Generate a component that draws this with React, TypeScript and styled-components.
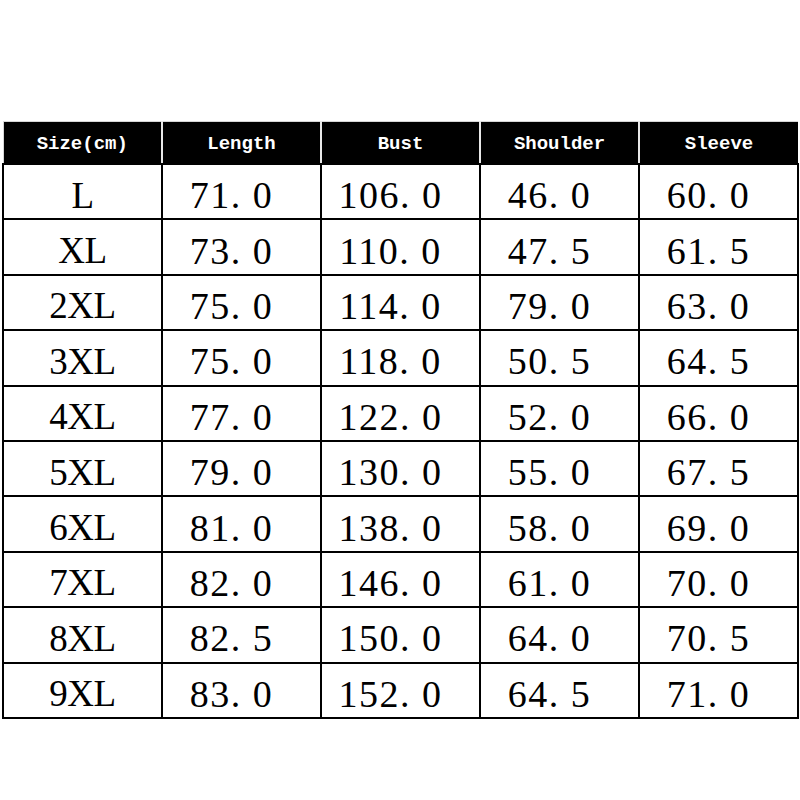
import React from 'react';
import styled, { createGlobalStyle } from 'styled-components';

const GlobalStyle = createGlobalStyle`
    body {
        margin: 0;
        background: #fff;
    }
`;

const Page = styled.div`
    width: 800px;
    height: 800px;
    padding-top: 121px;
    box-sizing: border-box;
`;

const Table = styled.table`
    margin-left: 2px;
    width: 797px;
    border-collapse: collapse;
    table-layout: fixed;
    border-top: 1px solid #d6d6d6;
`;

const HeadCell = styled.th`
    height: 38px;
    padding: 3px 0 0;
    background: #000;
    color: #fff;
    font-family: "Liberation Mono", "DejaVu Sans Mono", monospace;
    font-weight: bold;
    font-size: 19px;
    text-align: center;
    border-left: 2px solid #e8e8e8;
    border-bottom: 2px solid #000;

    &:first-child {
        border-left: 1px solid #d6d6d6;
    }
`;

const Row = styled.tr`
    height: 55.4px;
`;

const Cell = styled.td<{ $num?: boolean }>`
    padding: 7px ${(p) => (p.$num ? '20px' : '0')} 0 0;
    border: 2px solid #000;
    font-family: "Liberation Serif", "Times New Roman", serif;
    font-size: ${(p) => (p.$num ? '38px' : '37px')};
    letter-spacing: ${(p) => (p.$num ? '1.5px' : '-0.5px')};
    color: #000;
    text-align: center;
    line-height: 1;
`;

const headers = ['Size(cm)', 'Length', 'Bust', 'Shoulder', 'Sleeve'];

const rows = [
    ['L', '71.0', '106.0', '46.0', '60.0'],
    ['XL', '73.0', '110.0', '47.5', '61.5'],
    ['2XL', '75.0', '114.0', '79.0', '63.0'],
    ['3XL', '75.0', '118.0', '50.5', '64.5'],
    ['4XL', '77.0', '122.0', '52.0', '66.0'],
    ['5XL', '79.0', '130.0', '55.0', '67.5'],
    ['6XL', '81.0', '138.0', '58.0', '69.0'],
    ['7XL', '82.0', '146.0', '61.0', '70.0'],
    ['8XL', '82.5', '150.0', '64.0', '70.5'],
    ['9XL', '83.0', '152.0', '64.5', '71.0'],
];

// the source chart prints a wide gap after the decimal point
const spaced = (v: string) => v.replace('.', '. ');

const App = () => (
    <Page>
        <GlobalStyle />
        <Table>
            <thead>
                <tr>
                    {headers.map((h) => (
                        <HeadCell key={h}>{h}</HeadCell>
                    ))}
                </tr>
            </thead>
            <tbody>
                {rows.map((r) => (
                    <Row key={r[0]}>
                        {r.map((v, i) => (
                            <Cell key={i} $num={i > 0}>
                                {i > 0 ? spaced(v) : v}
                            </Cell>
                        ))}
                    </Row>
                ))}
            </tbody>
        </Table>
    </Page>
);

export default App;
